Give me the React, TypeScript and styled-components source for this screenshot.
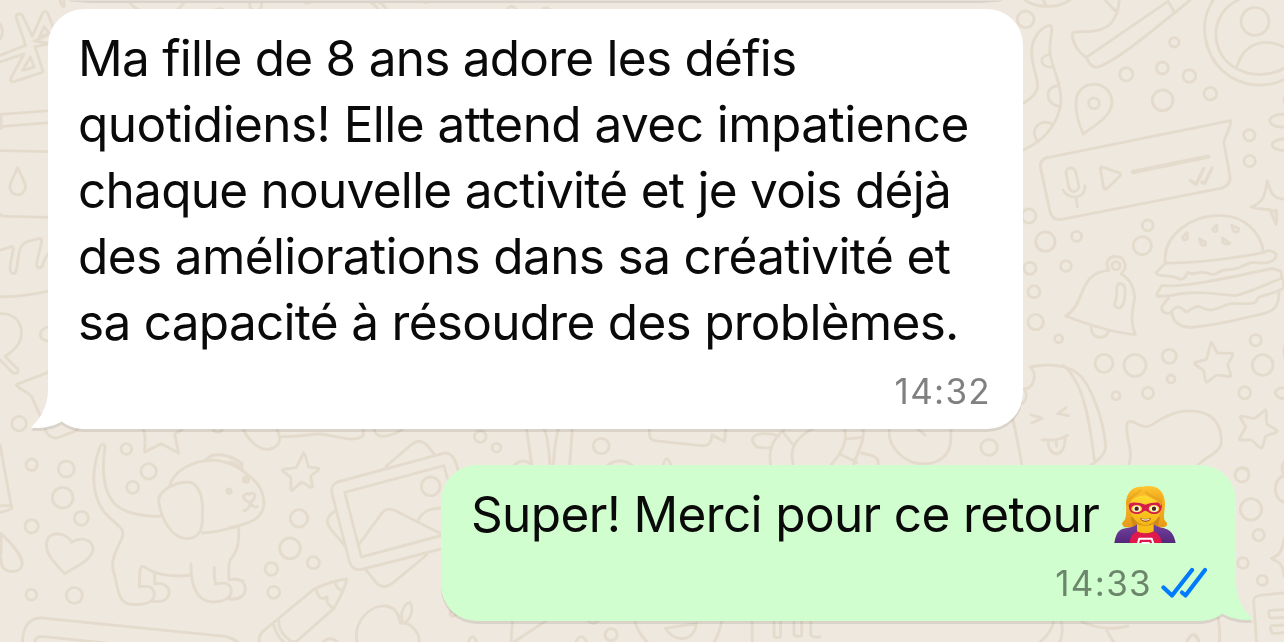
import styled, { createGlobalStyle } from 'styled-components';

const color = {
   wallpaper: '#efe8df',
   doodle: '#e4dbcc',
   incoming: '#ffffff',
   outgoing: '#d0fecf',
   text: '#0a0a0a',
   check: '#007bfe',
};

const GlobalStyle = createGlobalStyle`
   * {
      box-sizing: border-box;
   }

   body {
      margin: 0;
      overflow: hidden;
      background-color: ${color.wallpaper};
      font-family: Inter, 'Liberation Sans', sans-serif;
   }
`;

const Chat = styled.main`
   display: grid;
   width: 1284px;
   height: 642px;
   overflow: hidden;
   background-color: ${color.wallpaper};
`;

const Wallpaper = styled.svg`
   grid-area: 1 / 1;
   fill: none;
   stroke: ${color.doodle};
   stroke-width: 2.9;
   stroke-linecap: round;
   stroke-linejoin: round;

   path,
   circle,
   ellipse {
      vector-effect: non-scaling-stroke;
   }
`;

const Messages = styled.section`
   grid-area: 1 / 1;
   display: flex;
   flex-direction: column;
   padding: 0 48px;
   z-index: 1;
`;

const PreviousEdge = styled.div`
   width: 935px;
   height: 3px;
   margin: 0 0 6px 20px;
   border-radius: 0 0 30px 30px / 0 0 3px 3px;
   background: linear-gradient(#e4ded6 33%, #d9d3cb 34%);
`;

const Bubble = styled.article<{ $outgoing?: boolean }>`
   position: relative;
   align-self: ${({ $outgoing }) => ($outgoing ? 'flex-end' : 'flex-start')};
   display: flex;
   flex-direction: column;
   width: ${({ $outgoing }) => ($outgoing ? '795px' : '975px')};
   height: ${({ $outgoing }) => ($outgoing ? '156px' : '420px')};
   margin-bottom: 36px;
   padding: ${({ $outgoing }) => ($outgoing ? '16px 29px 0 30px' : '16px 32px 0 30px')};
   border-radius: 36px;
   background-color: ${({ $outgoing }) => ($outgoing ? color.outgoing : color.incoming)};
   filter: drop-shadow(0 3px 0.4px rgba(40, 25, 15, 0.1));
`;

const Tail = styled.svg<{ $outgoing?: boolean }>`
   position: absolute;
   bottom: 0;
   z-index: -1;
   ${({ $outgoing }) => ($outgoing ? 'right: -18px; transform: scaleX(-1);' : 'left: -18px;')}
   fill: ${({ $outgoing }) => ($outgoing ? color.outgoing : color.incoming)};
`;

const Line = styled.p<{ $spacing: number }>`
   display: flex;
   align-items: center;
   margin: 0;
   height: 66px;
   color: ${color.text};
   font-size: 49.5px;
   line-height: 66px;
   letter-spacing: ${({ $spacing }) => $spacing}px;
   font-feature-settings: 'calt' 0;
   white-space: pre;
`;

const Meta = styled.footer<{ $outgoing?: boolean }>`
   display: flex;
   justify-content: flex-end;
   align-items: center;
   gap: 9px;
   height: 36px;
   margin-top: 18px;
   color: ${({ $outgoing }) => ($outgoing ? '#6c866b' : '#808080')};
   font-size: 35px;
   letter-spacing: 1.3px;
   font-feature-settings: 'calt' 0;
`;

const Emoji = styled.svg`
   margin-left: 15px;
`;

const lines = [
   { text: 'Ma fille de 8 ans adore les défis', spacing: -0.75 },
   { text: 'quotidiens! Elle attend avec impatience', spacing: -0.54 },
   { text: 'chaque nouvelle activité et je vois déjà', spacing: -0.73 },
   { text: 'des améliorations dans sa créativité et', spacing: -0.62 },
   { text: 'sa capacité à résoudre des problèmes.', spacing: -0.71 },
];

function BubbleTail({ outgoing }: { outgoing?: boolean }) {
   return (
      <Tail $outgoing={outgoing} width="60" height="50" viewBox="0 0 60 50">
         <path d="M18 0V10C18 27 11 39 1 48.5C13 50 24 47 32 42.500C38 47 45 50 60 50V0Z" />
      </Tail>
   );
}

function Checks() {
   return (
      <svg width="46" height="32" viewBox="0 0 46 32" fill="none" stroke={color.check} strokeWidth="4.200" strokeLinecap="round" strokeLinejoin="round">
         <path d="M2.500 20.500L11 28.500L31 3" />
         <path d="M21 25.500L24.500 28.500L44 3" />
      </svg>
   );
}

function Heroine() {
   return (
      <Emoji width="64" height="64" viewBox="30 24 192 192">
         <defs>
            <linearGradient id="hair" x1="0" y1="0" x2="0" y2="1">
               <stop offset="0" stopColor="#ffc52e" />
               <stop offset="1" stopColor="#e79a17" />
            </linearGradient>
            <linearGradient id="skin" x1="0" y1="0" x2="0" y2="1">
               <stop offset="0" stopColor="#ffd92f" />
               <stop offset="1" stopColor="#f3b414" />
            </linearGradient>
            <linearGradient id="cape" x1="0" y1="0" x2="0" y2="1">
               <stop offset="0" stopColor="#7542a0" />
               <stop offset="1" stopColor="#54277b" />
            </linearGradient>
         </defs>
         <path fill="url(#hair)" d="M119 38C82 36 65 61 66 94C67 119 68 136 57 143C50 150 58 161 70 160H175C187 161 193 151 187 144C175 136 182 116 183 91C184 59 164 35 137 38C131 35 125 36 119 38Z" />
         <path fill="#d18b14" d="M80 130H168L160 162H88Z" />
         <path fill="url(#cape)" d="M31 207C36 178 44 165 65 163C82 160 94 157 100 150L124 169L148 150C157 160 177 160 189 166C204 173 211 187 215 207Z" />
         <path fill="#e0184c" d="M77 207C79 188 85 178 101 171C111 180 137 180 148 171C163 178 171 188 173 207Z" />
         <path fill="#f7bd18" d="M99 148C105 158 143 158 149 148V172C137 180 111 180 99 172Z" />
         <path fill="url(#skin)" d="M78 88C82 71 105 67 123 64C145 66 166 76 170 91C175 124 151 152 124 154C97 152 75 124 78 88Z" />
         <path fill="#d31d4a" d="M74 90C85 82 105 85 124 92C143 85 164 82 174 90C175 109 166 120 151 120C138 120 132 112 124 110C116 112 110 120 97 120C82 120 74 110 74 90Z" />
         <ellipse cx="98" cy="104" rx="16" ry="11" fill="#ffd83c" />
         <ellipse cx="150" cy="104" rx="16" ry="11" fill="#ffd83c" />
         <ellipse cx="98" cy="104" rx="11" ry="9" fill="#fff" />
         <ellipse cx="150" cy="104" rx="11" ry="9" fill="#fff" />
         <circle cx="98" cy="104" r="6.500" fill="#4b2615" />
         <circle cx="150" cy="104" r="6.500" fill="#4b2615" />
         <path fill="#9b4a1e" d="M108 132C118 136 131 136 141 132C138 147 112 147 108 132Z" />
         <path fill="#fff" d="M111 134C120 137 129 137 138 134C136 141 114 141 111 134Z" />
         <path fill="url(#hair)" d="M76 92C80 77 91 69 106 60C116 53 120 42 113 38C77 38 66 65 67 92ZM113 46C122 74 158 70 171 96C184 75 176 47 149 39C134 35 116 37 113 46Z" />
         <path fill="none" stroke="#dc9b19" strokeWidth="2.500" d="M76 77C85 61 104 58 111 47M124 52C139 69 160 68 173 86" />
         <path fill="none" stroke="#fff" strokeWidth="6" d="M102 208L106 194H143L148 208M113 207H137" />
      </Emoji>
   );
}

function Doodles() {
   return (
      <Wallpaper width="1284" height="642" viewBox="0 0 1284 642">
         {/* tentacle, eraser, avatar, voice note */}
         <g transform="translate(1020 0) scale(0.33333)">
            <circle cx="17" cy="58" r="25" />
            <path d="M15 0C45 23 110 28 150 0M70 0L78 16M255 0L284 31M298 0C292 70 260 92 205 95C180 96 156 94 157 102C158 135 178 158 199 172M199 172L444 4L461 32M199 172C207 190 217 207 235 201C300 177 405 85 511 0" />
            <path d="M9 310C90 265 34 230 35 155C36 115 60 83 88 76C105 75 86 120 90 160C96 205 122 240 123 300C119 370 70 425 9 450M86 164C55 170 60 202 94 202M112 258C72 259 75 318 121 319M97 372C58 354 30 388 50 420" />
            <circle cx="463" cy="127" r="14" />
            <circle cx="319" cy="223" r="20" />
            <circle cx="427" cy="204" r="18" />
            <circle cx="508" cy="228" r="19" />
            <circle cx="428" cy="301" r="31" />
            <circle cx="571" cy="281" r="19" />
            <circle cx="222" cy="310" r="16" />
            <path d="M190 402C176 374 167 340 168 305C172 237 265 235 276 300C278 350 225 374 190 402Z" />
            <circle cx="705" cy="64" r="42" />
            <path d="M580 0C535 65 550 160 610 214C665 263 740 266 800 235M655 0C575 35 564 145 635 197C690 235 752 228 800 202M650 202C672 125 740 111 800 145" />
            <path d="M72 475L631 362C638 374 610 415 612 429L630 530C632 551 618 561 602 565L125 658C108 661 95 654 90 635L62 505C59 489 63 477 83 471" />
            <path d="M138 520C136 500 164 498 168 519L176 555C179 576 151 583 146 560ZM129 570C142 599 197 601 195 557M168 592L172 620M241 505C242 500 248 500 253 503L298 519C303 522 302 526 299 529L262 565C256 570 252 567 250 560Z" />
            <path strokeWidth="4.500" d="M339 516L564 470" />
            <path strokeWidth="3.500" d="M511 541L528 553L551 506M546 546L554 550L576 504" />
            <circle cx="688" cy="406" r="17" />
            <circle cx="689" cy="483" r="17" />
            <path d="M800 342C730 340 735 386 800 381M800 416C740 418 745 453 800 452M800 284Q784 297 800 315" />
            <path d="M800 598C755 598 752 575 742 542C735 575 738 604 693 621C715 630 762 624 769 640V660" />
            <circle cx="27" cy="648" r="21" />
         </g>

         {/* bell, burger, stars, toast */}
         <g transform="translate(1020 210) scale(0.33333)">
            <path d="M750 0L769 44V0" />
            <circle cx="76" cy="95" r="29" />
            <circle cx="170" cy="79" r="15" />
            <circle cx="383" cy="46" r="16" />
            <circle cx="367" cy="107" r="27" />
            <circle cx="30" cy="175" r="18" />
            <circle cx="138" cy="168" r="16" />
            <circle cx="42" cy="245" r="18" />
            <circle cx="47" cy="336" r="23" />
            <circle cx="116" cy="386" r="12" />
            <circle cx="252" cy="460" r="27" />
            <circle cx="345" cy="466" r="33" />
            <circle cx="448" cy="439" r="21" />
            <circle cx="453" cy="507" r="12" />
            <circle cx="288" cy="557" r="12" />
            <circle cx="384" cy="549" r="17" />
            <circle cx="707" cy="391" r="17" />
            <circle cx="728" cy="465" r="31" />
            <circle cx="674" cy="548" r="18" />
            <path d="M800 533C755 530 755 565 800 568M800 390Q784 425 800 459" />
            <circle cx="288" cy="167" r="12" />
            <path d="M267 181C251 154 270 137 290 140C314 140 327 174 303 191C333 210 342 232 344 264C336 310 330 335 346 373C278 370 200 342 137 318C200 280 171 188 267 181ZM213 352C214 389 259 391 266 362M291 228C299 214 312 222 315 235C316 255 313 279 306 288C300 299 280 294 285 277C293 258 289 242 291 228Z" />
            <path d="M436 160C427 75 514 14 604 17C675 18 724 69 730 127C660 143 540 158 436 160L408 188C418 205 445 189 481 208C500 209 497 190 505 187C520 202 533 176 572 192C597 199 589 176 630 179C664 179 685 149 717 159C773 161 784 126 746 122L730 127M426 226C494 236 670 193 757 175L783 184L785 205C752 216 687 249 645 257C582 250 510 242 456 256C430 257 405 267 412 249ZM445 264L425 290C423 310 445 315 454 305C473 281 482 292 498 306C514 301 527 281 548 294C584 313 609 280 639 281C673 281 710 287 712 265C730 251 760 255 791 234V206M456 306C456 333 480 356 521 351C577 346 625 336 680 322C753 308 777 304 777 248" />
            <path d="M501 67L487 82Q490 95 502 86ZM538 86L543 102Q557 113 557 97ZM590 45L577 57Q582 69 591 62ZM635 46L641 65Q657 70 656 56ZM608 84L608 98Q621 105 630 100Z" />
            <path d="M573 397C580 398 586 425 593 429L637 430C646 434 619 460 624 467L633 496C632 506 596 491 589 496L562 516C552 519 555 488 551 482L524 462C518 453 556 453 560 446Z" />
            <path d="M736 600C743 600 735 638 742 643L771 661C778 669 739 674 736 681L727 712C720 722 701 690 691 689L660 690C652 687 678 657 677 650L660 622C660 613 696 627 704 625Z" />
            <path d="M30 471C54 491 42 535 13 537C22 552 20 569 9 580M30 471C85 460 135 464 168 487C208 513 250 620 257 709C257 735 231 753 206 770M130 466C195 520 210 650 223 750M33 614L66 625L35 639M138 593L113 611L145 617M66 690C95 690 118 692 143 676M84 693C86 748 138 743 135 684M108 691L110 709M-22 625Q-5 700 8 780" />
            <path d="M325 770C345 720 311 679 322 638C337 624 358 653 381 650C400 649 426 613 486 604C571 594 606 635 604 700C596 732 558 739 535 765" />
            <path d="M650 780Q670 765 685 780M795 755Q780 770 797 780" />
         </g>

         {/* puppy and heart */}
         <g transform="translate(0 430) scale(0.33333)">
            <path d="M0 45L35 235Q18 245 0 247M0 227L35 227M3 310C22 330 72 375 66 405C60 432 15 430 5 405L0 370M3 310V370" />
            <path d="M136 0C145 22 160 27 177 22L234 0M430 0C439 10 434 45 434 66L484 41L536 69L524 12L545 0M640 0Q653 16 666 0" />
            <circle cx="95" cy="104" r="17" />
            <circle cx="199" cy="117" r="24" />
            <circle cx="188" cy="203" r="31" />
            <circle cx="244" cy="265" r="21" />
            <circle cx="95" cy="289" r="20" />
            <circle cx="94" cy="494" r="16" />
            <circle cx="223" cy="496" r="24" />
            <circle cx="379" cy="57" r="16" />
            <circle cx="446" cy="124" r="23" />
            <circle cx="398" cy="172" r="18" />
            <path d="M194 431C168 403 123 362 145 324C164 299 207 316 214 337C244 319 281 327 279 361C269 394 231 408 194 431Z" />
            <path d="M480 259C365 259 290 230 315 48C311 39 305 41 300 50C268 139 278 200 314 248C346 283 374 292 368 318C357 351 328 385 341 426C354 468 352 513 385 522C423 527 463 522 463 492C459 464 437 469 418 470C420 440 415 407 431 409C470 438 520 442 573 435M573 402C572 455 586 510 630 515C672 519 698 502 693 475C687 456 664 458 647 463Q641 439 643 412M464 430V462C496 454 518 479 502 503C493 516 477 515 459 515" />
            <path d="M508 170C487 183 472 198 477 219C485 271 517 326 562 326C596 324 608 302 607 263C612 197 594 154 560 157C539 156 522 165 508 170C520 122 578 92 637 90Q685 92 727 121M619 88C640 64 690 73 727 101M607 309C650 308 670 298 716 289C717 330 716 361 692 387C684 398 686 426 687 449C705 447 720 449 730 453M688 508Q710 508 722 501" />
            <circle cx="687" cy="184" r="7" fill={color.doodle} />
            <path d="M67 640C68 595 85 561 126 564L675 619Q705 624 713 640M104 640Q105 616 132 620L330 640" />
         </g>

         {/* photos, pencil and apple */}
         <g transform="translate(230 430) scale(0.33333)">
            <path d="M40 0C60 35 89 63 119 57C155 50 152 21 142 0M149 19C199 24 231 12 270 12C315 16 381 42 400 15V0M433 0Q444 38 516 0" />
            <path d="M0 82C23 88 40 104 37 121C77 151 100 172 102 220C100 269 52 282 0 292M0 96Q18 99 37 121M0 449C62 434 60 520 0 505" />
            <circle cx="48" cy="149" r="8" fill={color.doodle} />
            <path d="M44 195C32 202 55 221 62 216C75 207 80 193 68 189Q62 188 59 193Q51 187 44 195M62 216Q58 240 42 242M62 216Q69 235 82 230" />
            <path d="M221 69C228 72 232 107 236 111L267 115C271 122 240 134 242 141L248 170C243 179 219 154 213 157L186 182C179 182 185 149 182 142L157 122C154 115 191 117 199 112Z" />
            <circle cx="207" cy="265" r="26" />
            <circle cx="180" cy="355" r="31" />
            <circle cx="124" cy="417" r="19" />
            <circle cx="250" cy="398" r="18" />
            <circle cx="131" cy="487" r="18" />
            <path d="M322 156L640 70C665 65 676 86 684 120M322 156C304 163 303 178 308 199L356 386C361 411 375 424 400 417L640 355M344 187L642 107L652 145M344 187L394 381L640 315L492 240C476 234 463 240 455 250L388 342M563 273C578 240 605 233 640 235M469 108L545 43C563 29 580 33 594 49L612 72M315 243C282 266 291 282 303 298L346 349M407 418L437 456C453 474 470 473 486 461L590 375" />
            <circle cx="602" cy="169" r="28" />
            <path d="M90 640C82 620 94 607 111 594L251 478C279 464 320 451 350 447C347 475 325 510 312 535L202 632Q195 640 180 632C160 616 144 595 147 573M130 581C137 610 148 627 166 640M259 476C262 501 274 513 292 500C287 520 297 526 312 535M316 460Q320 475 335 481" />
            <path d="M382 640C366 574 423 523 470 528C494 534 508 553 511 579C538 574 574 609 566 640M519 580C508 552 520 522 540 517C553 540 541 572 519 580M280 635Q300 618 322 635M0 625Q18 629 27 640" />
            <circle cx="669" cy="550" r="9" />
         </g>

         {/* left border */}
         <g transform="scale(0.33333)">
            <path d="M0 72Q15 92 0 118M0 166L77 136L48 52C47 41 62 39 67 46L97 109L127 41C134 29 143 36 145 44L165 95L103 123L160 132M0 186L72 162L32 236C30 245 37 246 45 244L125 218Q132 215 127 207L105 140L170 128M91 171L68 211L103 201ZM133 80L118 111L147 101Z" />
            <path d="M0 343L150 332M0 380L150 368M3 346V385M0 452L150 455M0 643C5 650 15 648 30 649L150 652M53 503C42 528 27 552 30 565C37 592 72 590 76 563C79 546 60 525 53 503Z" />
            <path d="M0 751L35 739C50 742 22 796 32 815C36 823 45 823 48 813C58 779 49 734 85 724L121 715C134 716 108 776 110 796C115 808 125 807 130 790Q135 770 150 755M0 890C50 892 95 885 150 872" />
            <path d="M0 941C37 939 66 961 64 1002C63 1038 33 1055 15 1070L54 1108C56 1121 42 1124 35 1115L0 1079M150 980C112 983 110 1024 150 1024M150 1115L49 1154C55 1169 85 1174 95 1190L122 1250" />
            <circle cx="57" cy="1271" r="22" />
         </g>

         {/* top border */}
         <g transform="translate(60 0) scale(0.33333)">
            <path d="M0 0Q4 20 12 20V0M205 0Q215 20 238 30M375 0Q370 16 350 30M725 0Q742 18 760 0M915 0Q945 8 955 30M940 0Q970 8 980 30M1080 0Q1097 16 1115 0M465 30Q478 22 492 30M1340 30Q1355 8 1370 30M1445 30Q1458 16 1472 30" />
            <circle cx="587" cy="14" r="18" />
         </g>

         {/* strip between the bubbles */}
         <g transform="translate(430 420) scale(0.39541 0.33333)">
            <ellipse cx="127" cy="50" rx="15" ry="17" />
            <ellipse cx="168" cy="83" rx="11" ry="13" />
            <ellipse cx="433" cy="78" rx="20" ry="23" />
            <ellipse cx="1414" cy="82" rx="21" ry="24" />
            <path d="M244 25L258 140M287 25Q298 40 304 140M326 25Q315 60 312 140M360 25L353 140M210 140Q235 105 262 140M445 140Q480 105 515 140M588 140Q599 92 610 140M555 25V45C557 65 570 62 585 64L685 77C710 80 712 60 713 44L745 65L748 25" />
            <path d="M895 30C865 60 855 90 862 140M883 48C860 40 820 33 815 60C822 90 840 82 861 84M895 40L920 77M970 25C930 50 905 80 920 140M1048 25C1060 70 1030 115 1010 140M1095 25C1100 65 1082 90 1070 140M1054 57L1095 52M1041 105L1080 127M1091 99C1120 105 1140 112 1132 140M1162 25C1155 80 1200 132 1248 132C1300 130 1315 90 1316 70L1318 25M1232 25L1252 45" />
         </g>

         {/* right of and below the outgoing bubble */}
         <g transform="translate(1184 440) scale(0.33333)">
            <circle cx="174" cy="105" r="21" />
            <circle cx="201" cy="208" r="32" />
            <circle cx="224" cy="285" r="17" />
            <circle cx="177" cy="369" r="16" />
            <circle cx="235" cy="421" r="15" />
            <path d="M300 108C266 115 265 177 300 187M300 65Q288 85 300 105M300 297C294 330 290 345 262 355C285 368 298 370 300 410" />
            <path d="M218 610L209 485Q208 469 226 466L300 459M300 509L260 511Q253 512 254 520L257 530Q258 535 270 534L300 532M300 555L265 557Q258 558 260 567L263 577Q265 581 275 580L300 578M103 535Q109 575 106 610M10 600Q32 565 43 600" />
         </g>
         <g transform="translate(220 560) scale(0.38265 0.33333)">
            <path d="M765 175L760 250M855 180L768 246M1083 180C1090 210 1105 235 1120 250M1312 180Q1305 220 1290 250M1164 205L1245 190C1240 245 1190 250 1164 205ZM1391 180V250M1448 180V230Q1455 235 1465 231V180M1500 180V225Q1508 232 1520 227V180M1544 180V225Q1552 235 1568 230" />
            <ellipse cx="1022" cy="224" rx="16" ry="18" />
            <path d="M648 250Q660 210 672 250M928 250Q943 210 960 250M962 183Q975 198 988 183" />
         </g>
         <path d="M1040 642Q1052 632 1054 620M1060 642Q1064 632 1061 620M1082 622Q1105 632 1128 626M1106 628Q1110 638 1114 642M1187 642Q1193 628 1199 642" />
      </Wallpaper>
   );
}

export default function App() {
   return (
      <>
         <GlobalStyle />
         <Chat>
            <Doodles />
            <Messages>
               <PreviousEdge />
               <Bubble>
                  <BubbleTail />
                  {lines.map(({ text, spacing }) => (
                     <Line key={text} $spacing={spacing}>
                        {text}
                     </Line>
                  ))}
                  <Meta>14:32</Meta>
               </Bubble>
               <Bubble $outgoing>
                  <BubbleTail outgoing />
                  <Line $spacing={-0.64}>
                     Super! Merci pour ce retour
                     <Heroine />
                  </Line>
                  <Meta $outgoing>
                     14:33
                     <Checks />
                  </Meta>
               </Bubble>
            </Messages>
         </Chat>
      </>
   );
}
